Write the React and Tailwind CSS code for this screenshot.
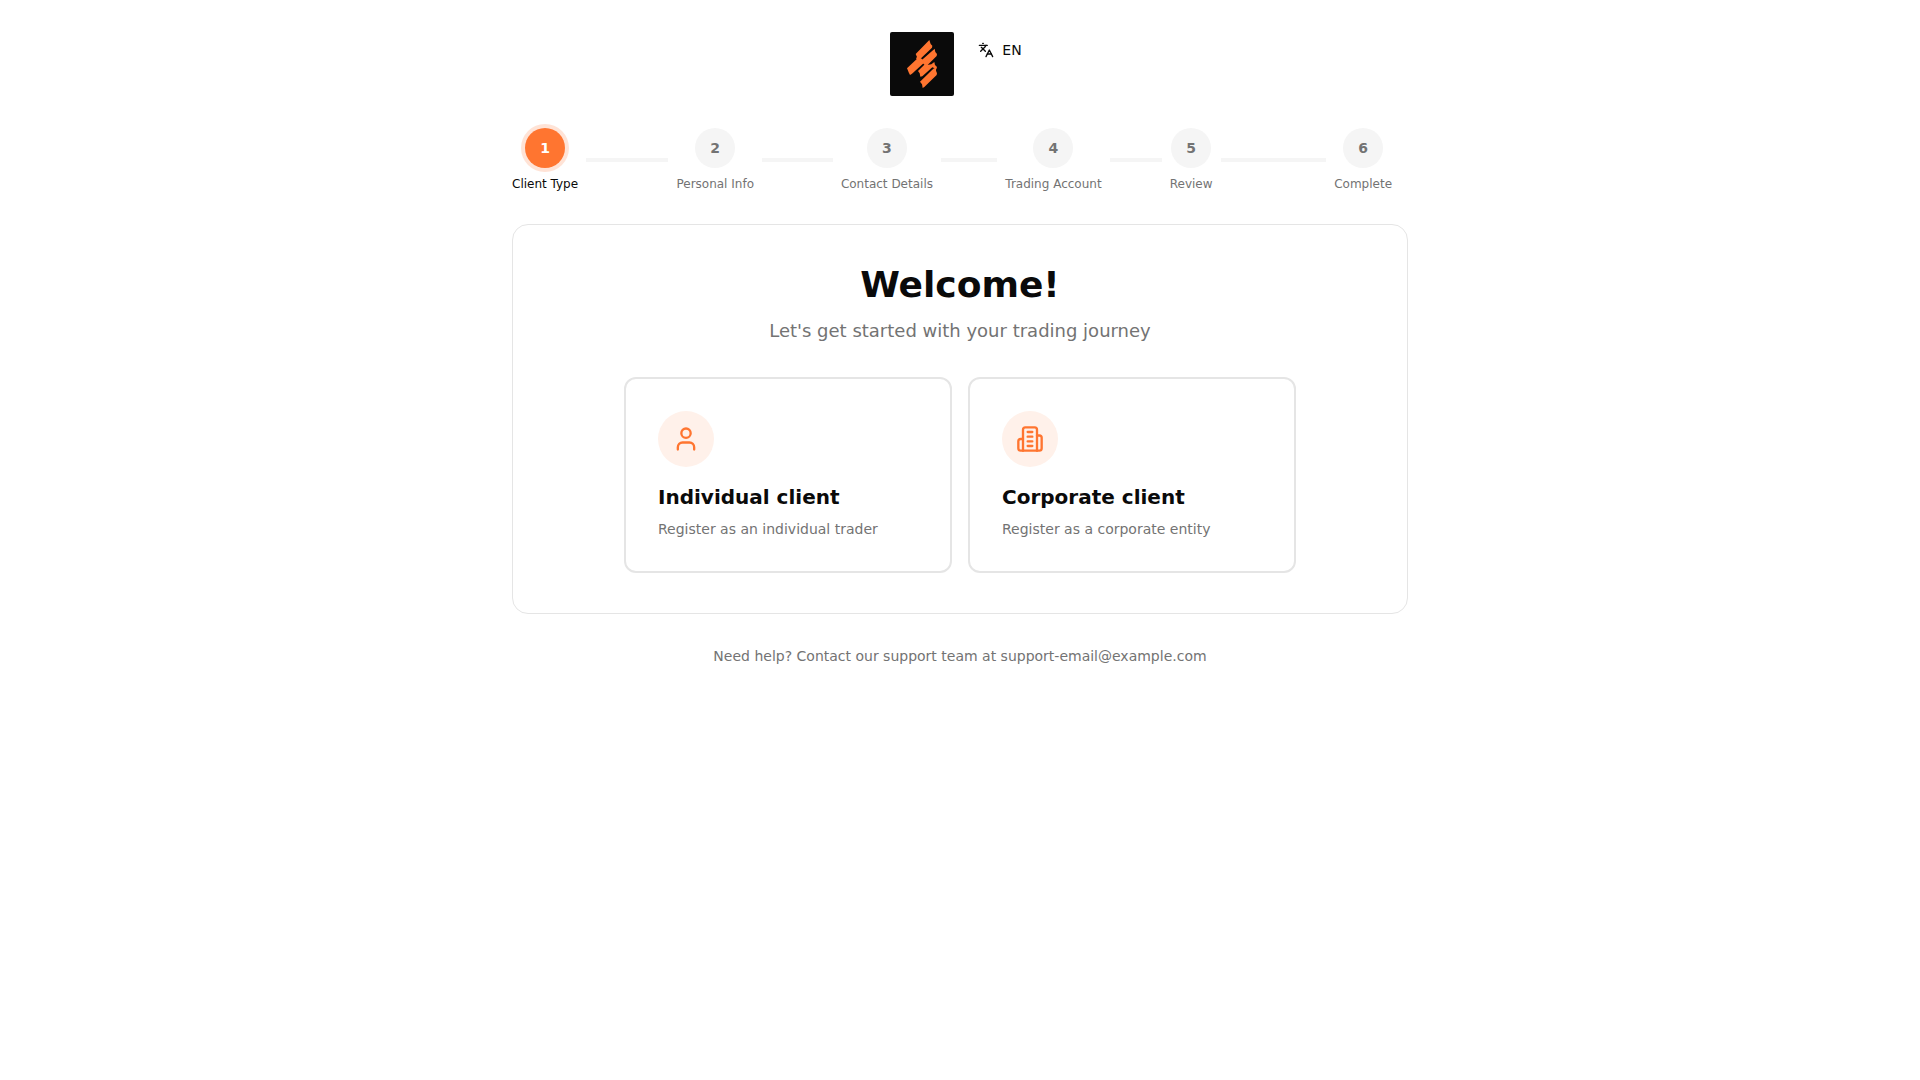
import React, { useState } from 'react';
import { Languages, User } from 'lucide-react';

const steps = ['Client Type', 'Personal Info', 'Contact Details', 'Trading Account', 'Review', 'Complete'];

const Logo = () => (
  <svg className="h-16 w-16" viewBox="0 0 192 192" role="img" aria-label="Logo">
    <rect width="192" height="192" rx="6" fill="#0a0a0a" />
    <g fill="#ff7530">
      <path d="M118 24l4 12 5 5-1 6-33 32-9 7-6-7 3-4-4-9z" />
      <path d="M86 76l9 4 9 11-38 34-6 4-4-8-5-12z" />
      <path d="M134 50l2 10 5 6-1 6-31 31-9-8-6-10 4-3z" />
      <path d="M133 90l2 9 6 6-2 6-12-5-30 27-6 1-2-10-5-7 22-22 10 3 8-1z" />
      <path d="M130 110l9-4-1 10 3 8-1 5-37 36-5 3-2-11-6-8z" />
    </g>
  </svg>
);

const BuildingIcon = ({ className }) => (
  <svg
    className={className}
    viewBox="0 0 24 24"
    fill="none"
    stroke="currentColor"
    strokeWidth="2"
    strokeLinecap="round"
    strokeLinejoin="round"
    aria-hidden="true"
  >
    <path d="M6 22V4a2 2 0 0 1 2-2h8a2 2 0 0 1 2 2v18Z" />
    <path d="M6 12H4a2 2 0 0 0-2 2v6a2 2 0 0 0 2 2h2" />
    <path d="M18 9h2a2 2 0 0 1 2 2v9a2 2 0 0 1-2 2h-2" />
    <path d="M10 6h4M10 10h4M10 14h4M10 18h4" />
  </svg>
);

const clientTypes = [
  { id: 'individual', title: 'Individual client', description: 'Register as an individual trader', icon: User },
  { id: 'corporate', title: 'Corporate client', description: 'Register as a corporate entity', icon: BuildingIcon },
];

const App = () => {
  const [currentStep, setCurrentStep] = useState(0);

  return (
    <div className="min-h-screen bg-white font-['DejaVu_Sans',sans-serif] text-[#0a0a0a]">
      <div className="mx-auto max-w-4xl py-8">
        {/* Header */}
        <header className="mb-8 flex items-start justify-center gap-4">
          <Logo />
          <button type="button" className="flex h-9 items-center gap-2 rounded-md px-2 text-sm hover:bg-neutral-100">
            <Languages size={16} />
            EN
          </button>
        </header>

        {/* Progress */}
        <ol className="mb-8 flex items-center">
          {steps.map((step, index) => {
            const last = index === steps.length - 1;
            return (
              <li key={step} className={`flex items-center ${last ? 'pr-4' : 'flex-1'}`}>
                <div className="flex flex-col items-center">
                  <div
                    className={`flex h-10 w-10 items-center justify-center rounded-full text-sm font-bold ${
                      index === currentStep ? 'bg-[#ff7530] text-white ring-4 ring-[#ff7530]/20' : 'bg-neutral-100 text-[#737373]'
                    }`}
                  >
                    {index + 1}
                  </div>
                  <span
                    className={`mt-2 text-xs whitespace-nowrap ${index === currentStep ? 'text-[#0a0a0a]' : 'text-[#737373]'}`}
                  >
                    {step}
                  </span>
                </div>
                {!last && <div className="mx-2 h-1 flex-1 bg-neutral-100"></div>}
              </li>
            );
          })}
        </ol>

        {/* Client Type */}
        <main className="rounded-2xl border border-[#e5e5e5] p-10">
          <div className="mb-8 text-center">
            <h1 className="mb-3 text-4xl font-bold">Welcome!</h1>
            <p className="text-lg text-[#737373]">Let's get started with your trading journey</p>
          </div>

          <div className="mx-auto grid max-w-2xl grid-cols-1 gap-4 md:grid-cols-2">
            {clientTypes.map(({ id, title, description, icon: Icon }) => (
              <button
                key={id}
                type="button"
                onClick={() => setCurrentStep(1)}
                className="flex flex-col items-start rounded-xl border-2 border-[#e5e5e5] p-8 text-left hover:border-[#ff7530]"
              >
                <span className="mb-4 flex h-14 w-14 items-center justify-center rounded-full bg-[#fff1ea] text-[#ff7530]">
                  <Icon className="h-7 w-7" />
                </span>
                <span className="mb-2 text-xl font-bold">{title}</span>
                <span className="text-sm text-[#737373]">{description}</span>
              </button>
            ))}
          </div>
        </main>

        {/* Footer */}
        <p className="mt-8 text-center text-sm text-[#737373]">
          Need help? Contact our support team at support-email@example.com
        </p>
      </div>
    </div>
  );
};

export default App;
